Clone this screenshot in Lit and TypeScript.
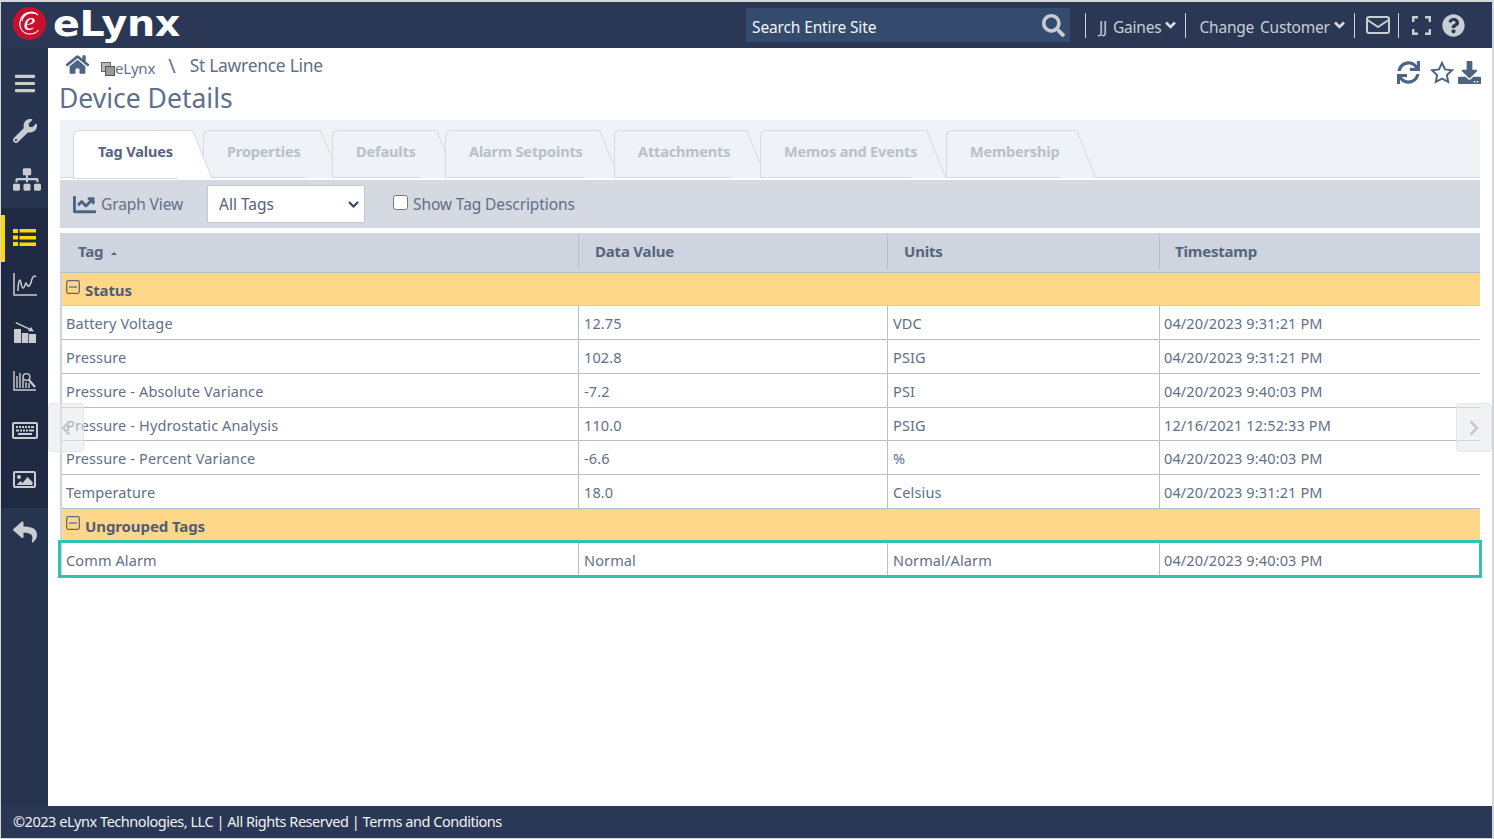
import { LitElement, css, html } from 'lit'
import { customElement } from 'lit/decorators.js'

const P = {
  bars: 'M16 132h416c8.837 0 16-7.163 16-16V76c0-8.837-7.163-16-16-16H16C7.163 60 0 67.163 0 76v40c0 8.837 7.163 16 16 16zm0 160h416c8.837 0 16-7.163 16-16v-40c0-8.837-7.163-16-16-16H16c-8.837 0-16 7.163-16 16v40c0 8.837 7.163 16 16 16zm0 160h416c8.837 0 16-7.163 16-16v-40c0-8.837-7.163-16-16-16H16c-8.837 0-16 7.163-16 16v40c0 8.837 7.163 16 16 16z',
  search: 'M505 442.7L405.3 343c-4.5-4.5-10.6-7-17-7H372c27.6-35.3 44-79.7 44-128C416 93.1 322.9 0 208 0S0 93.1 0 208s93.1 208 208 208c48.3 0 92.7-16.4 128-44v16.3c0 6.4 2.5 12.5 7 17l99.7 99.7c9.4 9.4 24.6 9.4 33.9 0l28.3-28.3c9.4-9.4 9.4-24.6.1-34zM208 336c-70.7 0-128-57.2-128-128 0-70.7 57.2-128 128-128 70.7 0 128 57.2 128 128 0 70.7-57.2 128-128 128z',
  help: 'M504 256c0 136.997-111.043 248-248 248S8 392.997 8 256C8 119.083 119.043 8 256 8s248 111.083 248 248zM262.655 90c-54.497 0-89.255 22.957-116.549 63.758-3.536 5.286-2.353 12.415 2.715 16.258l34.699 26.31c5.205 3.947 12.621 3.008 16.665-2.122 17.864-22.658 30.113-35.797 57.303-35.797 20.429 0 45.698 13.148 45.698 32.958 0 14.976-12.363 22.667-32.534 33.976C247.128 238.528 216 254.941 216 296v4c0 6.627 5.373 12 12 12h56c6.627 0 12-5.373 12-12v-1.333c0-28.462 83.186-29.647 83.186-106.667 0-58.002-60.165-102-116.531-102zM256 338c-25.365 0-46 20.635-46 46 0 25.364 20.635 46 46 46s46-20.636 46-46c0-25.365-20.635-46-46-46z',
  home: 'M280.37 148.26L96 300.11V464a16 16 0 0 0 16 16l112.06-.29a16 16 0 0 0 15.92-16V368a16 16 0 0 1 16-16h64a16 16 0 0 1 16 16v95.64a16 16 0 0 0 16 16.05L464 480a16 16 0 0 0 16-16V300L295.67 148.26a12.19 12.19 0 0 0-15.3 0zM571.6 251.47L488 182.56V44.05a12 12 0 0 0-12-12h-56a12 12 0 0 0-12 12v72.61L318.47 43a48 48 0 0 0-61 0L4.34 251.47a12 12 0 0 0-1.6 16.9l25.5 31A12 12 0 0 0 45.15 301l235.22-193.74a12.19 12.19 0 0 1 15.3 0L530.9 301a12 12 0 0 0 16.9-1.6l25.5-31a12 12 0 0 0-1.7-16.93z',
  sync: 'M440.65 12.57l4 82.77A247.16 247.16 0 0 0 255.83 8C134.73 8 33.91 94.92 12.29 209.82A12 12 0 0 0 24.09 224h49.05a12 12 0 0 0 11.67-9.26 175.91 175.91 0 0 1 317-56.94l-101.46-4.86a12 12 0 0 0-12.57 12v47.41a12 12 0 0 0 12 12H500a12 12 0 0 0 12-12V12a12 12 0 0 0-12-12h-47.37a12 12 0 0 0-11.98 12.57zM255.83 432a175.61 175.61 0 0 1-146-77.8l101.8 4.87a12 12 0 0 0 12.57-12v-47.4a12 12 0 0 0-12-12H12a12 12 0 0 0-12 12V500a12 12 0 0 0 12 12h47.35a12 12 0 0 0 12-12.6l-4.15-82.57A247.17 247.17 0 0 0 255.83 504c121.11 0 221.93-86.92 243.55-201.82a12 12 0 0 0-11.8-14.18h-49.05a12 12 0 0 0-11.67 9.26A175.86 175.86 0 0 1 255.83 432z',
  download: 'M216 0h80c13.3 0 24 10.7 24 24v168h87.7c17.8 0 26.7 21.5 14.1 34.1L269.7 378.3c-7.5 7.5-19.8 7.5-27.3 0L90.1 226.1c-12.6-12.6-3.7-34.1 14.1-34.1H192V24c0-13.3 10.7-24 24-24zm296 376v112c0 13.3-10.7 24-24 24H24c-13.3 0-24-10.7-24-24V376c0-13.3 10.7-24 24-24h146.7l49 49c20.1 20.1 52.5 20.1 72.6 0l49-49H488c13.3 0 24 10.7 24 24zm-124 88c0-11-9-20-20-20s-20 9-20 20 9 20 20 20 20-9 20-20zm64 0c0-11-9-20-20-20s-20 9-20 20 9 20 20 20 20-9 20-20z',
  wrench: 'M507.73 109.1c-2.24-9.03-13.54-12.09-20.12-5.51l-74.36 74.36-67.88-11.31-11.31-67.88 74.36-74.36c6.62-6.62 3.43-17.9-5.66-20.16-47.38-11.74-99.55.91-136.58 37.93-39.64 39.64-50.55 97.1-34.05 147.2L18.74 402.76c-24.99 24.99-24.99 65.51 0 90.5 24.99 24.99 65.51 24.99 90.5 0l213.21-213.21c50.12 16.71 107.47 5.68 147.37-34.22 37.07-37.07 49.7-89.32 37.91-136.73zM64 472c-13.25 0-24-10.75-24-24 0-13.26 10.75-24 24-24s24 10.74 24 24c0 13.25-10.75 24-24 24z',
  sitemap: 'M128 352H32c-17.67 0-32 14.33-32 32v96c0 17.67 14.33 32 32 32h96c17.67 0 32-14.33 32-32v-96c0-17.67-14.33-32-32-32zm-24-80h192v48h48v-48h192v48h48v-57.59c0-21.17-17.23-38.41-38.41-38.41H344v-64h40c17.67 0 32-14.33 32-32V32c0-17.67-14.33-32-32-32H256c-17.67 0-32 14.33-32 32v96c0 17.67 14.33 32 32 32h40v64H94.41C73.23 224 56 241.23 56 262.41V320h48v-48zm264 80h-96c-17.67 0-32 14.33-32 32v96c0 17.67 14.33 32 32 32h96c17.67 0 32-14.33 32-32v-96c0-17.67-14.33-32-32-32zm240 0h-96c-17.67 0-32 14.33-32 32v96c0 17.67 14.33 32 32 32h96c17.67 0 32-14.33 32-32v-96c0-17.67-14.33-32-32-32z',
  reply: 'M8.309 189.836L184.313 37.851C199.719 24.546 224 35.347 224 56.015v80.053c160.629 1.839 288 34.032 288 186.258 0 61.441-39.581 122.309-83.333 154.132-13.653 9.931-33.111-2.533-28.077-18.631 45.344-145.012-21.507-183.51-176.59-185.742V360c0 20.7-24.3 31.453-39.687 18.164l-176.004-152c-11.071-9.562-11.086-26.753 0-36.328z',
  chartLine: 'M496 384H64V80c0-8.84-7.16-16-16-16H16C7.16 64 0 71.16 0 80v336c0 17.67 14.33 32 32 32h464c8.84 0 16-7.16 16-16v-32c0-8.84-7.16-16-16-16zM464 96H345.94c-21.38 0-32.09 25.85-16.97 40.97l32.4 32.4L288 242.75l-73.37-73.37c-12.5-12.5-32.76-12.5-45.25 0l-68.69 68.69c-6.25 6.25-6.25 16.38 0 22.63l22.62 22.62c6.25 6.25 16.38 6.25 22.63 0L192 237.25l73.37 73.37c12.5 12.5 32.76 12.5 45.25 0l96-96 32.4 32.4c15.12 15.12 40.97 4.41 40.97-16.97V112c.01-8.84-7.15-16-15.99-16z',
}

const fa = (d: string, vb: string, w: number, h: number) => html`
  <svg width=${w} height=${h} viewBox=${vb} fill="currentColor"><path d=${d}></path></svg>`

// the sidebar glyphs with no single path
const listIcon = html`<svg width="23" height="19" viewBox="0 0 23 19" fill="currentColor">
  <rect x="0" y="1" width="5" height="4"></rect><rect x="6.500" y="1" width="16.500" height="3.500"></rect>
  <rect x="0" y="7.500" width="5" height="4"></rect><rect x="6.500" y="8" width="16.500" height="3.500"></rect>
  <rect x="0" y="14" width="5" height="4"></rect><rect x="6.500" y="14.500" width="16.500" height="3.500"></rect></svg>`

const trendIcon = html`<svg width="24" height="23" viewBox="0 0 24 23" fill="none" stroke="currentColor" stroke-width="1.500">
  <path d="M1 0v22h23"></path><path d="M5 18c0-7 1-11 2-11s1 8 3 8 2-5 3-5 1 4 3 3 2-4 3-7 3-4 4-2"></path></svg>`

const barsDownIcon = html`<svg width="24" height="21" viewBox="0 0 24 21" fill="currentColor">
  <rect x="1" y="7" width="7" height="14"></rect><rect x="8.800" y="11" width="6.500" height="10"></rect><rect x="16" y="12" width="7" height="9"></rect>
  <path d="M3 0l14 6.500-.6 1.300L2.400 1.300z"></path><path d="M21 9.500l-6-.5 3-4z"></path></svg>`

const analysisIcon = html`<svg width="24" height="20" viewBox="0 0 24 20" fill="none" stroke="currentColor" stroke-width="1.400">
  <path d="M1 0v19h22"></path><path d="M4 17V5M7 17V2M10 17V8M13 17v-6M16 17v-5"></path>
  <circle cx="13.500" cy="6" r="3.400"></circle><path d="M16 9l6 7" stroke-width="2.200"></path></svg>`

const keyboardIcon = html`<svg width="26" height="17" viewBox="0 0 26 17" fill="currentColor">
  <path d="M2 0h22a2 2 0 0 1 2 2v13a2 2 0 0 1-2 2H2a2 2 0 0 1-2-2V2a2 2 0 0 1 2-2zm0 2v13h22V2z"></path>
  <path d="M4 4h2v2H4zm3 0h2v2H7zm3 0h2v2h-2zm3 0h2v2h-2zm3 0h2v2h-2zm3 0h3v2h-3zM4 7.500h3v2H4zm4 0h2v2H8zm3 0h2v2h-2zm3 0h2v2h-2zm3 0h5v2h-5zM6 11h14v2H6z"></path></svg>`

const imageIcon = html`<svg width="23" height="17" viewBox="0 0 23 17" fill="currentColor">
  <path d="M2 0h19a2 2 0 0 1 2 2v13a2 2 0 0 1-2 2H2a2 2 0 0 1-2-2V2a2 2 0 0 1 2-2zm0 2v13h19V2z"></path>
  <circle cx="6" cy="6" r="2"></circle><path d="M3.500 14l4-4 2 2 5-6 5 5v3z"></path></svg>`

const layersIcon = html`<svg width="14" height="14" viewBox="0 0 14 14">
  <rect x="0.500" y="0.500" width="9" height="9" fill="#b7b7b7" stroke="#666"></rect>
  <rect x="4.500" y="4.500" width="9" height="9" fill="#999" stroke="#555"></rect></svg>`

const chevron = html`<svg width="11" height="8" viewBox="0 0 11 8" fill="none" stroke="currentColor" stroke-width="2.600">
  <path d="M1 1.500l4.500 4.500L10 1.500"></path></svg>`

const tabs = [
  { label: 'Tag Values', width: 120, gap: 10 },
  { label: 'Properties', width: 118, gap: 11 },
  { label: 'Defaults', width: 105, gap: 8 },
  { label: 'Alarm Setpoints', width: 155, gap: 14 },
  { label: 'Attachments', width: 133, gap: 13 },
  { label: 'Memos and Events', width: 167, gap: 19 },
  { label: 'Membership', width: 131, gap: 0 },
]

const groups = [
  {
    name: 'Status',
    rows: [
      ['Battery Voltage', '12.75', 'VDC', '04/20/2023 9:31:21 PM'],
      ['Pressure', '102.8', 'PSIG', '04/20/2023 9:31:21 PM'],
      ['Pressure - Absolute Variance', '-7.2', 'PSI', '04/20/2023 9:40:03 PM'],
      ['Pressure - Hydrostatic Analysis', '110.0', 'PSIG', '12/16/2021 12:52:33 PM'],
      ['Pressure - Percent Variance', '-6.6', '%', '04/20/2023 9:40:03 PM'],
      ['Temperature', '18.0', 'Celsius', '04/20/2023 9:31:21 PM'],
    ],
  },
  {
    name: 'Ungrouped Tags',
    rows: [['Comm Alarm', 'Normal', 'Normal/Alarm', '04/20/2023 9:40:03 PM']],
  },
]

@customElement('app-root')
export class AppRoot extends LitElement {
  render() {
    return html`
      <div class="frame">
        <header class="top">
          <div class="logo">
            <span class="badge">
              <svg class="ring" width="33" height="33" viewBox="0 0 33 33" fill="none" stroke="#fff" stroke-width="1.200">
                <path d="M25 8C20 3 10 5 7.500 13c-2.500 8 3 14 9 14 4 0 7-1 9-4"></path>
                <path d="M22 6.500C17 4.500 10 7 9 14"></path>
              </svg>
              <span class="badge-e">e</span>
            </span>
            <span class="word">eLynx</span>
          </div>
          <div class="search">
            <span>Search Entire Site</span>
            ${fa(P.search, '0 0 512 512', 23, 23)}
          </div>
          <div class="user">
            <span class="sep"></span>
            <span class="menu">JJ Gaines ${chevron}</span>
            <span class="sep"></span>
            <span class="menu">Change Customer ${chevron}</span>
            <span class="sep"></span>
            <svg class="mail" width="24" height="18" viewBox="0 0 24 18" fill="none" stroke="currentColor" stroke-width="2">
              <rect x="1" y="1" width="22" height="16" rx="2"></rect><path d="M1.500 4l10.500 7 10.500-7"></path>
            </svg>
            <span class="sep"></span>
            <svg class="full" width="19" height="19" viewBox="0 0 19 19" fill="none" stroke="currentColor" stroke-width="2.400">
              <path d="M1.200 6V1.200H6M13 1.200h4.800V6M17.800 13v4.800H13M6 17.800H1.200V13"></path>
            </svg>
            <span class="help">${fa(P.help, '0 0 512 512', 23, 23)}</span>
          </div>
        </header>
        <nav class="side">
          <div class="nav-group top-group">
            <span class="nav nav-bars">${fa(P.bars, '0 0 448 512', 20, 23)}</span>
            <span class="nav nav-wrench">${fa(P.wrench, '0 0 512 512', 24, 24)}</span>
            <span class="nav nav-map">${fa(P.sitemap, '0 0 640 512', 28, 23)}</span>
          </div>
          <div class="nav-group dark">
            <span class="nav active">${listIcon}</span>
            <span class="nav">${trendIcon}</span>
            <span class="nav">${barsDownIcon}</span>
            <span class="nav">${analysisIcon}</span>
            <span class="nav nav-keys">${keyboardIcon}</span>
            <span class="nav">${imageIcon}</span>
          </div>
          <div class="nav-group">
            <span class="nav">${fa(P.reply, '0 0 512 512', 24, 24)}</span>
          </div>
        </nav>
        <main class="main">
          <div class="crumbs">
            <div class="trail">
              <span class="home">${fa(P.home, '0 0 576 512', 25, 21)}</span>
              <span class="layers">${layersIcon}</span>
              <span class="root">eLynx</span>
              <span class="slash">\\</span>
              <span class="here">St Lawrence Line</span>
            </div>
            <div class="actions">
              ${fa(P.sync, '0 0 512 512', 23, 23)}
              <svg class="star" width="24" height="23" viewBox="0 0 24 23" fill="none" stroke="currentColor" stroke-width="2">
                <path d="M12 2l3 6.400 7 .9-5.100 4.800 1.300 6.900L12 17.700 5.800 21l1.300-6.900L2 9.300l7-.9z"></path>
              </svg>
              ${fa(P.download, '0 0 512 512', 23, 23)}
            </div>
          </div>
          <h1>Device Details</h1>
          <div class="tabs">
            ${tabs.map(
              (t, i) => html`<div class="tab ${i === 0 ? 'on' : ''}" style="width:${t.width}px;margin-right:${t.gap}px"><span>${t.label}</span></div>`,
            )}
          </div>
          <div class="tools">
            <span class="graph">${fa(P.chartLine, '0 0 512 512', 23, 23)} Graph View</span>
            <span class="pick">
              <select><option>All Tags</option></select>
              <svg width="11" height="7" viewBox="0 0 11 7" fill="none" stroke="#3c465a" stroke-width="2.200"><path d="M1 1l4.500 4.500L10 1"></path></svg>
            </span>
            <label><input type="checkbox" />Show Tag Descriptions</label>
          </div>
          <div class="grid">
            <div class="row head">
              <div class="cell">Tag <span class="sort"></span></div>
              <div class="cell">Data Value</div>
              <div class="cell">Units</div>
              <div class="cell">Timestamp</div>
            </div>
            ${groups.map(
              (g) => html`
                <div class="band">
                  <svg width="14" height="14" viewBox="0 0 14 14" fill="none" stroke="#5c6a85" stroke-width="1.300">
                    <rect x="0.700" y="0.700" width="12.600" height="12.600" rx="1.500"></rect><path d="M3 7h8"></path>
                  </svg>
                  <span>${g.name}</span>
                </div>
                ${g.rows.map(
                  (r) => html`
                    <div class="row item ${r[0] === 'Comm Alarm' ? 'picked' : ''}">
                      ${r.map((c) => html`<div class="cell">${c}</div>`)}
                    </div>`,
                )}`,
            )}
          </div>
          <span class="pager left"><svg width="10" height="16" viewBox="0 0 10 16" fill="none" stroke="currentColor" stroke-width="2.500"><path d="M8.500 1.500L2 8l6.500 6.500"></path></svg></span>
          <span class="pager right"><svg width="10" height="16" viewBox="0 0 10 16" fill="none" stroke="currentColor" stroke-width="2.500"><path d="M1.500 1.500L8 8l-6.500 6.500"></path></svg></span>
        </main>
        <footer class="foot">©2023 eLynx Technologies, LLC | All Rights Reserved | Terms and Conditions</footer>
      </div>
    `
  }

  static styles = css`
    :host {
      display: block;
      height: 100vh;
      background: #d4d6da;
      font-family: "Noto Sans", "Open Sans", sans-serif;
      color: #626f88;
      overflow: hidden;
    }

    .frame {
      box-sizing: border-box;
      height: 100%;
      padding: 2px 2px 1px 1px;
      display: grid;
      grid-template-columns: 47px 1fr;
      grid-template-rows: 46px 1fr 32px;
    }

    .top {
      grid-column: 1 / 3;
      background: #2a3855;
      display: flex;
      align-items: center;
      color: #c9cdd4;
    }

    .logo {
      display: flex;
      align-items: center;
      width: 745px;
      padding-left: 12px;
      box-sizing: border-box;
    }
    .badge {
      position: relative;
      width: 33px;
      height: 33px;
      border-radius: 50%;
      background: #c8102e;
      display: flex;
      align-items: center;
      justify-content: center;
      margin: -3px 7px 0 0;
    }
    .ring {
      position: absolute;
      inset: 0;
    }
    .badge-e {
      font: italic 400 26px/1 "Liberation Serif", serif;
      color: #fff;
      margin-top: -4px;
    }
    .word {
      display: inline-block;
      font: 700 36px/1 "DejaVu Sans", sans-serif;
      letter-spacing: -0.400px;
      color: #fff;
      margin-top: -3px;
      transform: scaleX(1.100);
      transform-origin: left center;
    }

    .search {
      width: 324px;
      height: 34px;
      box-sizing: border-box;
      padding: 0 5px 0 6px;
      background: #344b6e;
      display: flex;
      align-items: center;
      justify-content: space-between;
      color: #f2f4f7;
      font-size: 15.500px;
      letter-spacing: -0.130px;
    }
    .search span {
      padding-top: 3px;
    }
    .search svg {
      color: #c8ccd2;
    }

    .user {
      display: flex;
      align-items: center;
      margin-left: 15px;
      font-size: 15.500px;
      letter-spacing: -0.200px;
      word-spacing: 2px;
    }
    .sep {
      width: 1px;
      height: 25px;
      background: #cfd3da;
    }
    .menu {
      display: flex;
      align-items: center;
      gap: 4px;
      padding: 3px 9px 0 13px;
    }
    .menu svg {
      color: #d9dce1;
      margin-top: -3px;
    }
    .mail {
      margin: 0 8px 0 11px;
    }
    .full {
      margin: 0 11px 0 13px;
    }
    .help {
      display: flex;
    }

    .side {
      background: #27344f;
      display: flex;
      flex-direction: column;
      color: #c9ccd1;
    }
    .nav-group {
      display: flex;
      flex-direction: column;
    }
    .top-group {
      height: 160px;
      padding-top: 14px;
      box-sizing: border-box;
    }
    .dark {
      background: #1f2a42;
      height: 300px;
      padding-top: 7px;
      box-sizing: border-box;
    }
    .nav {
      height: 48.500px;
      display: flex;
      align-items: center;
      justify-content: center;
      box-sizing: border-box;
    }
    .nav-bars {
      height: 43px;
    }
    .nav-wrench {
      height: 51px;
    }
    .nav-map {
      height: 46px;
      padding-left: 5px;
    }
    .nav-keys {
      margin-top: 1px;
    }
    .active {
      height: 47px;
      color: #ffd800;
      border-left: 4px solid #ffd800;
      padding: 0 4px 3px 0;
    }
    .active + .nav {
      margin-top: -2px;
    }

    .main {
      position: relative;
      background: #fff;
      padding: 0 12px;
      min-width: 0;
      overflow: hidden;
    }

    .crumbs {
      height: 34px;
      display: flex;
      justify-content: space-between;
    }
    .trail {
      display: flex;
      align-items: center;
      padding: 0 0 0 5px;
      height: 35px;
    }
    .home {
      display: flex;
      color: #4d6484;
      margin: -2px 11px 0 0;
    }
    .layers {
      display: flex;
      margin-top: 7px;
    }
    .root {
      font-size: 15px;
      letter-spacing: -0.200px;
      margin-top: 5px;
    }
    .slash {
      font-size: 20px;
      margin: 0 14px 0 13px;
    }
    .here {
      font-size: 17.500px;
      letter-spacing: -0.300px;
      margin-top: -2px;
    }
    .actions {
      display: flex;
      gap: 10px;
      color: #4d6484;
      padding-top: 13px;
      margin-right: -1px;
      height: 23px;
    }
    .star {
      margin-right: -6px;
    }

    h1 {
      margin: 0 0 0 -1px;
      height: 38px;
      font-size: 26.500px;
      line-height: 32px;
      font-weight: 400;
      color: #5d7090;
    }

    .tabs {
      display: flex;
      height: 58px;
      box-sizing: border-box;
      padding: 10px 0 0 13px;
      background: #eff2f7;
      border-bottom: 1px solid #d5dae2;
    }
    .tab {
      position: relative;
      height: 48px;
      box-sizing: border-box;
      padding: 10px 0 0 23px;
      background: #eff2f7;
      border: 1px solid #d5dae2;
      border-right: 0;
      border-radius: 6px 0 0 0;
      font-size: 14.500px;
      font-weight: 700;
      letter-spacing: -0.150px;
      color: #b9c0cc;
      white-space: nowrap;
    }
    .tab span {
      position: relative;
      z-index: 1;
    }
    .tab::after {
      content: "";
      position: absolute;
      top: -1px;
      right: 0;
      width: 34px;
      height: 47px;
      background: inherit;
      border-top: 1px solid #d5dae2;
      border-right: 1px solid #d5dae2;
      transform: skewX(22deg);
      transform-origin: top left;
    }
    .tab.on {
      background: #fff;
      color: #56647f;
      z-index: 2;
      height: 49px;
      padding-left: 24px;
    }
    .tab.on::after {
      height: 48px;
    }

    .tools {
      margin-top: 2px;
      height: 48px;
      box-sizing: border-box;
      padding: 0 0 0 13px;
      background: #d5d9e1;
      display: flex;
      align-items: center;
      font-size: 15.500px;
      letter-spacing: -0.100px;
    }
    .graph {
      display: flex;
      align-items: center;
      gap: 5px;
      width: 134px;
    }
    .graph svg {
      color: #4d6484;
    }
    .pick {
      position: relative;
      display: flex;
    }
    .pick svg {
      position: absolute;
      right: 6px;
      top: 16px;
      pointer-events: none;
    }
    select {
      appearance: none;
      width: 158px;
      height: 38px;
      padding-left: 11px;
      background: #fff;
      border: 1px solid #c3c8d1;
      border-radius: 2px;
      font: inherit;
      color: #56627a;
    }
    label {
      display: flex;
      align-items: center;
      margin-left: 28px;
    }
    input {
      width: 15px;
      height: 15px;
      margin: 0 5px 3px 0;
    }

    .grid {
      margin-top: 5px;
      border-left: 2px solid #cfd5df;
      font-size: 14.500px;
      letter-spacing: 0.130px;
    }
    .row {
      display: grid;
      grid-template-columns: 517px 309px 272px 1fr;
    }
    .head {
      height: 40px;
      margin-left: -2px;
      padding-left: 2px;
      background: #cfd5df;
      border-bottom: 1px solid #b8bfcc;
      box-sizing: border-box;
      font-weight: 700;
      color: #56647f;
      font-size: 15px;
      letter-spacing: -0.200px;
    }
    .head .cell {
      padding-left: 16px;
      line-height: 35px;
      border-right: 1px solid #b8bfcc;
      margin: 1px 0 3px;
    }
    .head .cell:last-child {
      border-right: 0;
      padding-left: 15px;
    }
    .sort {
      display: inline-block;
      margin: 0 0 2px 4px;
      border: 3px solid transparent;
      border-top: 0;
      border-bottom: 3px solid #56647f;
    }
    .band {
      height: 33px;
      box-sizing: border-box;
      background: #ffd789;
      border-bottom: 1px solid #c8ccd4;
      display: flex;
      align-items: center;
      gap: 5px;
      padding: 0 0 0 4px;
      font-weight: 700;
      font-size: 15px;
      letter-spacing: -0.100px;
      color: #4f5d79;
    }
    .band span {
      padding-top: 1px;
    }
    .band svg {
      margin-top: -4px;
    }
    .item {
      height: 33.850px;
      box-sizing: border-box;
      border-bottom: 1px solid #b8bfcc;
    }
    .item .cell {
      padding: 2px 0 0 5px;
      line-height: 30px;
      border-right: 1px solid #b8bfcc;
    }
    .item .cell:first-child,
    .item .cell:last-child {
      padding-left: 4px;
    }
    .item .cell:last-child {
      border-right: 0;
    }
    .picked {
      position: relative;
      margin-left: -2px;
      padding-left: 2px;
      outline: 3px solid #2ec4ad;
      outline-offset: -1px;
      border-bottom: 0;
    }
    .picked .cell {
      padding-top: 3px;
    }

    .pager {
      position: absolute;
      top: 355px;
      width: 36px;
      height: 49px;
      box-sizing: border-box;
      border: 1px solid rgba(225, 227, 231, 0.7);
      border-radius: 4px;
      background: rgba(230, 231, 234, 0.55);
      display: flex;
      align-items: center;
      color: #c4c9d2;
    }
    .pager.left {
      left: 0;
      justify-content: flex-end;
      padding-right: 12px;
    }
    .pager.right {
      right: 0;
      justify-content: center;
    }

    .foot {
      grid-column: 1 / 3;
      background: #2a3855;
      color: #f0f2f5;
      font-size: 14.500px;
      letter-spacing: -0.460px;
      padding-left: 12px;
      line-height: 31px;
    }
  `
}

declare global {
  interface HTMLElementTagNameMap {
    'app-root': AppRoot
  }
}
